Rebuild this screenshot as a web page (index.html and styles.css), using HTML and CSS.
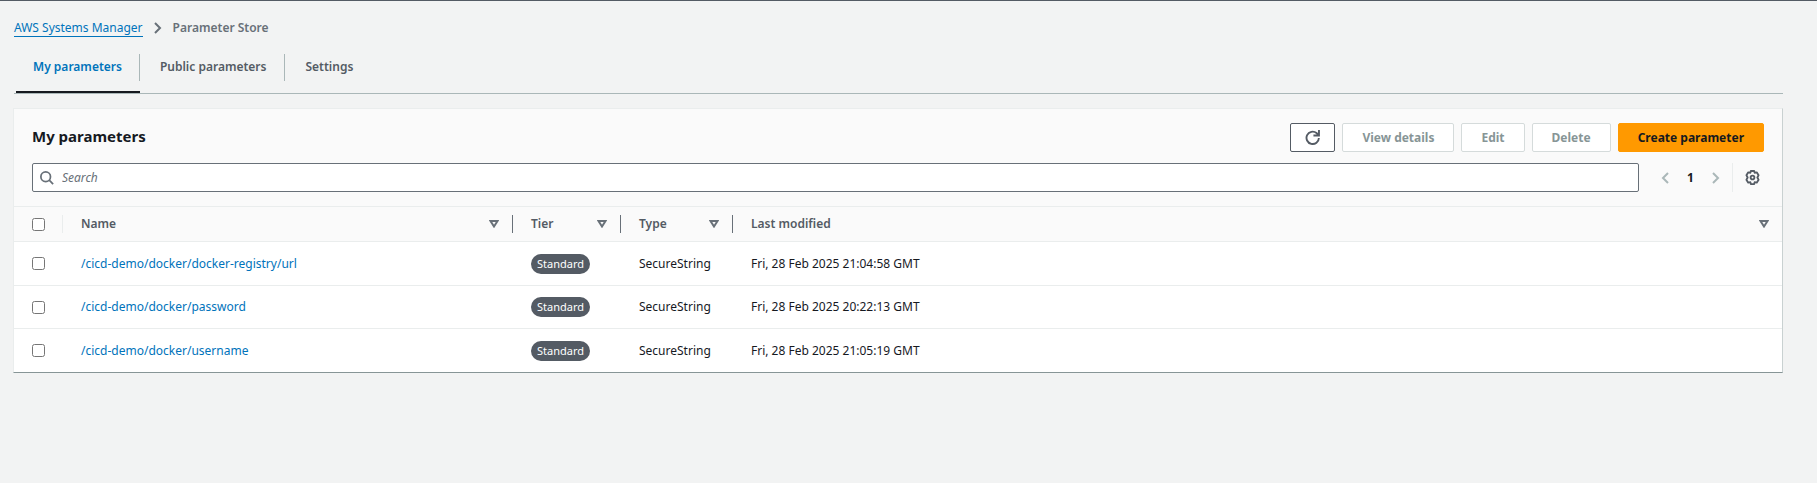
FILE: index.html
```html
<!DOCTYPE html>
<html lang="en">
<head>
<meta charset="utf-8">
<title>Parameter Store</title>
<link rel="stylesheet" href="styles.css">
</head>
<body>
<main class="page">
  <nav class="breadcrumb" aria-label="Breadcrumb">
    <a class="breadcrumb-link" href="#">AWS Systems Manager</a>
    <svg class="breadcrumb-icon" viewBox="0 0 8 12" aria-hidden="true"><path d="M1 1l5 5-5 5"/></svg>
    <span class="breadcrumb-current">Parameter Store</span>
  </nav>
  <div class="tabs" role="tablist">
    <button class="tab tab-active" role="tab" aria-selected="true"><span class="tab-label">My parameters</span></button>
    <button class="tab" role="tab" aria-selected="false"><span class="tab-label">Public parameters</span></button>
    <button class="tab" role="tab" aria-selected="false"><span class="tab-label">Settings</span></button>
  </div>
  <section class="panel">
    <header class="panel-header">
      <div class="title-row">
        <h1 class="title">My parameters</h1>
        <div class="actions">
          <button class="button button-icon" aria-label="Refresh"><svg class="icon" viewBox="0 0 16 16" aria-hidden="true"><path d="M14.800 8.500A6.600 6.600 0 1 1 12.300 3.200L14.500 5.200M14.900 0v5.900H9"/></svg></button>
          <button class="button" disabled>View details</button>
          <button class="button" disabled>Edit</button>
          <button class="button" disabled>Delete</button>
          <button class="button button-primary">Create parameter</button>
        </div>
      </div>
      <div class="filter-row">
        <label class="search">
          <svg class="search-icon" viewBox="0 0 16 16" aria-hidden="true"><circle cx="6.500" cy="6.500" r="5.500"/><path d="M10.500 10.500l4.500 4.500"/></svg>
          <input class="search-input" type="search" placeholder="Search" aria-label="Search">
        </label>
        <div class="pager">
          <button class="page-arrow" aria-label="Previous page" disabled><svg class="arrow" viewBox="0 0 8 12" aria-hidden="true"><path d="M7 1L2 6l5 5"/></svg></button>
          <button class="page-number" aria-current="page">1</button>
          <button class="page-arrow" aria-label="Next page" disabled><svg class="arrow" viewBox="0 0 8 12" aria-hidden="true"><path d="M1 1l5 5-5 5"/></svg></button>
        </div>
        <button class="settings" aria-label="Preferences"><svg class="icon icon-gear" viewBox="0 0 16 16" aria-hidden="true"><path d="M6.200 1h3.600l.5 2 2.200-.5 2 3L13.200 8l1.300 2.500-2 3-2.200-.5-.5 2H6.200l-.5-2-2.200.5-2-3L2.800 8 1.500 5.500l2-3 2.200.5z"/><circle cx="8" cy="8" r="2"/></svg></button>
      </div>
    </header>
    <table class="table">
      <colgroup><col class="col-check"><col class="col-name"><col class="col-tier"><col class="col-type"><col></colgroup>
      <thead>
        <tr>
          <th><div class="head head-check"><input class="check" type="checkbox" aria-label="Select all"></div></th>
          <th><div class="head">Name<svg class="sort" viewBox="0 0 10 8" aria-hidden="true"><path d="M1.500 1h7L5 6.500z"/></svg></div></th>
          <th><div class="head">Tier<svg class="sort" viewBox="0 0 10 8" aria-hidden="true"><path d="M1.500 1h7L5 6.500z"/></svg></div></th>
          <th><div class="head">Type<svg class="sort" viewBox="0 0 10 8" aria-hidden="true"><path d="M1.500 1h7L5 6.500z"/></svg></div></th>
          <th><div class="head head-last">Last modified<svg class="sort" viewBox="0 0 10 8" aria-hidden="true"><path d="M1.500 1h7L5 6.500z"/></svg></div></th>
        </tr>
      </thead>
      <tbody>
        <tr>
          <td><input class="check" type="checkbox" aria-label="Select /cicd-demo/docker/docker-registry/url"></td>
          <td><a class="link" href="#">/cicd-demo/docker/docker-registry/url</a></td>
          <td><span class="badge">Standard</span></td>
          <td>SecureString</td>
          <td>Fri, 28 Feb 2025 21:04:58 GMT</td>
        </tr>
        <tr>
          <td><input class="check" type="checkbox" aria-label="Select /cicd-demo/docker/password"></td>
          <td><a class="link" href="#">/cicd-demo/docker/password</a></td>
          <td><span class="badge">Standard</span></td>
          <td>SecureString</td>
          <td>Fri, 28 Feb 2025 20:22:13 GMT</td>
        </tr>
        <tr>
          <td><input class="check" type="checkbox" aria-label="Select /cicd-demo/docker/username"></td>
          <td><a class="link" href="#">/cicd-demo/docker/username</a></td>
          <td><span class="badge">Standard</span></td>
          <td>SecureString</td>
          <td>Fri, 28 Feb 2025 21:05:19 GMT</td>
        </tr>
      </tbody>
    </table>
  </section>
</main>
</body>
</html>
```
FILE: styles.css
```css
* { box-sizing: border-box; }
body {
  margin: 0;
  background: #f2f3f3;
  border-top: 1px solid #545b64;
  color: #16191f;
  font: 12px/20px "Noto Sans", "Open Sans", sans-serif;
}
button, input { font: inherit; color: inherit; }
button { margin: 0; padding: 0; border: 0; background: none; }
svg { display: block; flex: none; fill: none; stroke: currentColor; stroke-width: 2; }
.page { padding: 17px 34px 0 13px; }

.breadcrumb { display: flex; align-items: center; gap: 11px; height: 20px; padding-left: 1px; }
.breadcrumb-link { height: 18px; line-height: 18px; color: #0073bb; text-decoration: none; border-bottom: 1px solid #0073bb; }
.breadcrumb-icon { width: 8px; height: 12px; color: #687078; }
.breadcrumb-current { color: #687078; font-weight: 600; }

.tabs { display: flex; height: 56px; margin-left: 1px; border-bottom: 1px solid #aab7b8; padding: 16px 0 0 2px; }
.tab { display: flex; align-items: flex-start; color: #545b64; font-weight: 600; }
.tab-label { height: 27px; line-height: 26px; padding: 0 18px 0 20px; border-right: 1px solid #aab7b8; }
.tab:last-child .tab-label { border-right: 0; }
.tab-active { color: #0073bb; border-bottom: 2px solid #16191f; }
.tab-active .tab-label { padding: 0 17px; }

.panel { margin-top: 14px; border: 1px solid #eaeded; border-right-color: #c9d1d1; border-bottom-color: #879596; background: #fff; }
.panel-header { padding: 14px 18px; background: #fafafa; border-bottom: 1px solid #eaeded; }
.title-row { display: flex; justify-content: space-between; align-items: flex-start; }
.title { margin: 0; font-size: 15px; line-height: 26px; font-weight: 700; }
.actions { display: flex; gap: 7px; }
.button { height: 29px; padding: 0 19px; border: 1px solid #545b64; border-radius: 2px; background: #fff; color: #545b64; font-weight: 700; }
.button:disabled { border-color: #d5dbdb; color: #879596; }
.button-icon { padding: 0 14px; }
.button-primary { background: #f90; border-color: #f90; color: #16191f; }
.icon { width: 15px; height: 15px; }
.icon-gear { stroke-linejoin: round; }

.filter-row { display: flex; align-items: center; margin-top: 11px; }
.search { flex: 1; display: flex; align-items: center; gap: 8px; height: 29px; padding: 0 7px; border: 1px solid #687078; border-radius: 2px; background: #fff; color: #687078; }
.search-icon { width: 14px; height: 14px; }
.search-input { flex: 1; min-width: 0; padding: 0; border: 0; outline: 0; background: none; }
.search-input::placeholder { color: #687078; font-style: italic; opacity: 1; }
.pager { display: flex; align-items: center; height: 29px; padding: 0 12px 0 22px; border-right: 1px solid #eaeded; }
.page-arrow { color: #aab7b8; }
.arrow { width: 8px; height: 12px; }
.page-number { width: 43px; font-weight: 700; }
.settings { padding: 0 4px 0 12px; color: #545b64; }

.table { width: 100%; table-layout: fixed; border-collapse: separate; border-spacing: 0; }
.col-check { width: 49px; }
.col-name { width: 450px; }
.col-tier { width: 108px; }
.col-type { width: 112px; }
.table th { height: 35px; padding: 0; background: #fafafa; border-bottom: 1px solid #eaeded; text-align: left; font-weight: 600; color: #545b64; }
.head { display: flex; align-items: center; justify-content: space-between; height: 18px; padding: 0 13px 0 18px; border-right: 1px solid #687078; }
.head-check { border-right-color: #eaeded; }
.head-last { border-right: 0; }
.sort { width: 10px; height: 8px; color: #687078; }
.table td { height: 43px; padding: 0 18px; border-bottom: 1px solid #eaeded; white-space: nowrap; }
.table tr:first-child td { height: 44px; }
.table tr:last-child td { border-bottom: 0; }
.check { display: block; width: 13px; height: 13px; margin: 0; }
.link { color: #0073bb; text-decoration: none; }
.badge { display: block; width: max-content; padding: 0 6px; border-radius: 10px; background: #545b64; color: #fff; font-size: 11px; line-height: 20px; }
```
